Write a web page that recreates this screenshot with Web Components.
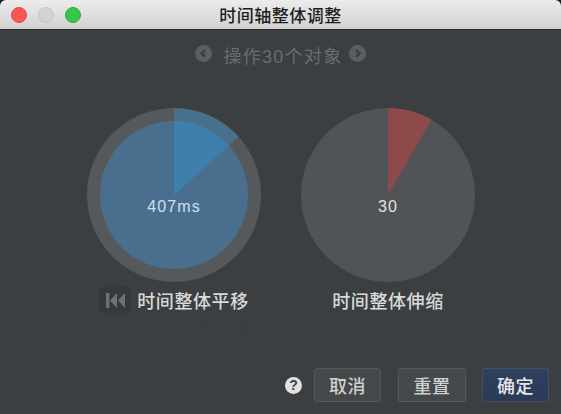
<!DOCTYPE html>
<html lang="zh">
<head>
<meta charset="utf-8">
<title>时间轴整体调整</title>
<style>
  html, body { margin: 0; height: 100%; background: #1b1c1d; overflow: hidden; }
  body { font-family: "Liberation Sans", "Noto Sans CJK SC", sans-serif; }
</style>
</head>
<body>
<dialog-window>
  <title-bar slot="title">时间轴整体调整</title-bar>
  <object-nav>操作30个对象</object-nav>
  <div slot="dials">
    <pie-dial value="407ms" angle="48" color="#3f7fae" ring="#56595b" fill="#4a6f8e" text="#cfe0ee" back>时间整体平移</pie-dial>
    <pie-dial value="30" angle="30" color="#8e4a4b" ring="#505457" fill="#505457" text="#e2e2e2">时间整体伸缩</pie-dial>
  </div>
  <help-icon slot="actions"></help-icon>
  <dial-button slot="actions" style="margin-left:12px;width:67px">取消</dial-button>
  <dial-button slot="actions" style="margin-left:17px">重置</dial-button>
  <dial-button slot="actions" style="margin-left:16px;width:67px" primary>确定</dial-button>
</dialog-window>

<script>
'use strict';

class DialogWindow extends HTMLElement {
  connectedCallback() {
    this.attachShadow({mode: 'open'});
    this.shadowRoot.innerHTML = `
      <style>
        :host {
          display: flex;
          flex-direction: column;
          width: 561px;
          height: 414px;
          background: #3b3f41;
          border-radius: 6px 6px 0 0;
          overflow: hidden;
          position: relative;
        }
        .dials {
          display: flex;
          padding: 0 0 0 87px;
          margin-top: 43px;
        }
        ::slotted([slot="dials"]) {
          display: flex;
          gap: 40px;
        }
        .actions {
          display: flex;
          align-items: center;
          margin-top: auto;
          padding: 0 12px 12px 0;
          justify-content: flex-end;
        }
        .stripe {
          position: absolute;
          left: 198px;
          top: 318px;
          width: 50px;
          height: 96px;
          background: linear-gradient(90deg, transparent, rgba(72,72,92,.2) 50%, transparent);
          -webkit-mask-image: linear-gradient(transparent, #000 40%);
          pointer-events: none;
        }
      </style>
      <slot name="title"></slot>
      <slot></slot>
      <div class="dials"><slot name="dials"></slot></div>
      <div class="actions"><slot name="actions"></slot></div>
      <div class="stripe"></div>
    `;
  }
}

class TitleBar extends HTMLElement {
  connectedCallback() {
    this.attachShadow({mode: 'open'});
    this.shadowRoot.innerHTML = `
      <style>
        :host {
          display: flex;
          align-items: center;
          justify-content: center;
          position: relative;
          height: 30px;
          box-sizing: border-box;
          background: linear-gradient(#ececec, #d2d2d2);
          border-bottom: 1px solid #2b2b2b;
          color: #1e1e1e;
          font-size: 17px;
          font-weight: 500;
          letter-spacing: .5px;
        }
        .lights {
          position: absolute;
          left: 11px;
          top: 7px;
          display: flex;
          gap: 11px;
        }
        .lights i {
          display: block;
          width: 16px;
          height: 16px;
          border-radius: 50%;
          box-sizing: border-box;
        }
        .close { background: #fc5753; border: 1px solid #df4744; }
        .min { background: #d3d3d3; border: 1px solid #c4c4c4; }
        .max { background: #34c84a; border: 1px solid #2dac2f; }
      </style>
      <div class="lights"><i class="close"></i><i class="min"></i><i class="max"></i></div>
      <slot></slot>
    `;
  }
}

class ObjectNav extends HTMLElement {
  connectedCallback() {
    this.attachShadow({mode: 'open'});
    this.shadowRoot.innerHTML = `
      <style>
        :host {
          display: flex;
          align-items: center;
          justify-content: center;
          gap: 11px;
          height: 20px;
          margin-top: 15px;
          color: #6a6d6f;
          font-size: 18px;
          letter-spacing: 1.3px;
        }
        svg { width: 17px; height: 17px; display: block; margin-top: -3px; }
        svg:last-child { margin-left: -5px; }
      </style>
      <svg viewBox="0 0 16 16"><circle cx="8" cy="8" r="8" fill="#5c5f61"/><path d="M9.4 4.8 6.2 8l3.2 3.2" fill="none" stroke="#3b3f41" stroke-width="2.4"/></svg>
      <span><slot></slot></span>
      <svg viewBox="0 0 16 16"><circle cx="8" cy="8" r="8" fill="#5c5f61"/><path d="M6.6 4.8 9.8 8l-3.2 3.2" fill="none" stroke="#3b3f41" stroke-width="2.4"/></svg>
    `;
  }
}

class PieDial extends HTMLElement {
  connectedCallback() {
    let angle = Number(this.getAttribute('angle')) * Math.PI / 180;
    let color = this.getAttribute('color');
    let ring = this.getAttribute('ring');
    let fill = this.getAttribute('fill');
    let x = 87 + 87 * Math.sin(angle);
    let y = 87 - 87 * Math.cos(angle);
    let back = this.hasAttribute('back') ? `
      <span class="back"><svg viewBox="0 0 19 15" width="19" height="15"><path d="M0 0h3.5v15H0zM11 0v15L4 7.5zM19 0v15l-7-7.5z" fill="#6e7173"/></svg></span>` : '';

    this.attachShadow({mode: 'open'});
    this.shadowRoot.innerHTML = `
      <style>
        :host {
          display: flex;
          flex-direction: column;
          align-items: center;
          width: 174px;
        }
        .pie { position: relative; width: 174px; height: 174px; }
        .pie svg { display: block; }
        .value {
          position: absolute;
          left: 0;
          right: 0;
          top: 89px;
          text-align: center;
          font: 16px/20px "Liberation Sans", sans-serif;
          letter-spacing: 1.1px;
          color: ${this.getAttribute('text')};
        }
        .label {
          display: flex;
          align-items: center;
          justify-content: center;
          white-space: nowrap;
          gap: 6px;
          height: 26px;
          margin-top: 5px;
          color: #d8d9d9;
          font-size: 18px;
          font-weight: 500;
          letter-spacing: .6px;
        }
        .back {
          display: flex;
          align-items: center;
          justify-content: center;
          width: 32px;
          height: 26px;
          border-radius: 5px;
          background: #363839;
        }
      </style>
      <div class="pie">
        <svg width="174" height="174" viewBox="0 0 174 174">
          <circle cx="87" cy="87" r="87" fill="${ring}"/>
          <path d="M87 87V0A87 87 0 0 1 ${x} ${y}Z" fill="${color}" opacity="${fill === ring ? 1 : .6}"/>
          ${fill === ring ? '' : `<circle cx="87" cy="87" r="74" fill="${fill}"/>
          <path d="M87 87V13A74 74 0 0 1 ${87 + 74 * Math.sin(angle)} ${87 - 74 * Math.cos(angle)}Z" fill="${color}"/>`}
        </svg>
        <div class="value">${this.getAttribute('value')}</div>
      </div>
      <div class="label">${back}<slot></slot></div>
    `;
  }
}

class HelpIcon extends HTMLElement {
  connectedCallback() {
    this.attachShadow({mode: 'open'});
    this.shadowRoot.innerHTML = `
      <style>
        :host {
          display: flex;
          align-items: center;
          justify-content: center;
          width: 17px;
          height: 17px;
          border-radius: 50%;
          background: #e2e2e2;
          color: #3b3f41;
          font: bold 14px/17px "Liberation Sans", sans-serif;
        }
      </style>
      ?
    `;
  }
}

class DialButton extends HTMLElement {
  connectedCallback() {
    this.attachShadow({mode: 'open'});
    this.shadowRoot.innerHTML = `
      <style>
        :host {
          display: flex;
          align-items: center;
          justify-content: center;
          box-sizing: border-box;
          width: 68px;
          height: 34px;
          border-radius: 3px;
          border: 1px solid #55595b;
          background: #45494b;
          color: #cfd0d0;
          font-size: 18px;
          font-weight: 500;
          letter-spacing: .5px;
        }
        :host([primary]) {
          background: linear-gradient(#2f4160, #2a3a56);
          border-color: #475062;
          color: #e4e7ea;
        }
      </style>
      <slot></slot>
    `;
  }
}

customElements.define('dialog-window', DialogWindow);
customElements.define('title-bar', TitleBar);
customElements.define('object-nav', ObjectNav);
customElements.define('pie-dial', PieDial);
customElements.define('help-icon', HelpIcon);
customElements.define('dial-button', DialButton);
</script>
</body>
</html>
